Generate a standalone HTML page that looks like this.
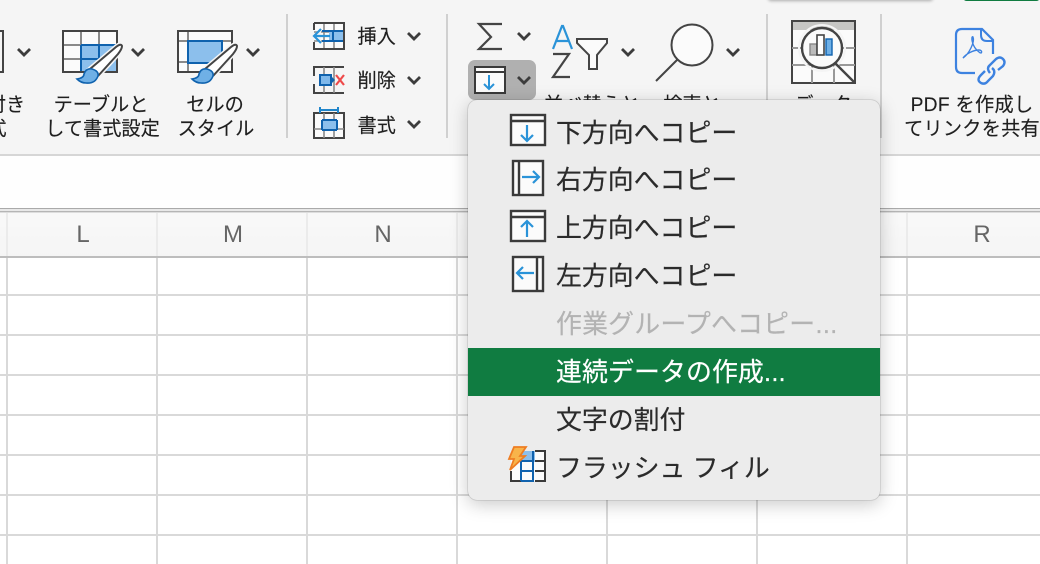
<!DOCTYPE html>
<html lang="ja"><head><meta charset="utf-8">
<style>
html,body{margin:0;padding:0;background:#fff}
#p{position:relative;width:1040px;height:564px;overflow:hidden;background:#fff;font-family:"Liberation Sans","Noto Sans CJK JP",sans-serif;color:#2b2b2b}
.a{position:absolute}
.t{position:absolute;white-space:nowrap;font-size:19.2px;line-height:24px;color:#1f1f1f;-webkit-text-stroke:.15px #1f1f1f}
.c{transform:translateX(-50%)}
.m{position:absolute;left:556px;white-space:nowrap;font-size:25.9px;line-height:34px;color:#2b2b2b;-webkit-text-stroke:.2px currentColor}
.h{position:absolute;left:0;width:1040px;height:2px;background:#d9d9d9}
.v{position:absolute;top:213px;width:2px;height:351px;background:#d9d9d9}
.col{position:absolute;top:220px;font-size:24px;line-height:30px;color:#666;transform:translateX(-50%)}
svg{position:absolute;left:0;top:0}
</style></head><body><div id="p">
<div class="a" style="left:0;top:0;width:1040px;height:154px;background:#f5f5f5"></div>
<div class="a" style="left:0;top:154px;width:1040px;height:2px;background:#d6d6d6"></div>
<div class="a" style="left:0;top:156px;width:1040px;height:52px;background:#fefefe"></div>
<div class="a" style="left:0;top:208px;width:1040px;height:5px;background:linear-gradient(#aaa 0,#aaa 1px,#e8e8e8 1px,#e8e8e8 3px,#b5b5b5 3px,#b5b5b5 4px,#ddd 4px)"></div>
<div class="a" style="left:0;top:213px;width:1040px;height:43px;background:linear-gradient(#fbfbfb,#f3f3f3)"></div>
<div class="h" style="top:294px"></div><div class="h" style="top:334px"></div><div class="h" style="top:374px"></div><div class="h" style="top:414px"></div><div class="h" style="top:454px"></div><div class="h" style="top:494px"></div><div class="h" style="top:534px"></div>
<div class="v" style="left:6px"></div><div class="v" style="left:156px"></div><div class="v" style="left:306px"></div><div class="v" style="left:456px"></div><div class="v" style="left:606px"></div><div class="v" style="left:756px"></div><div class="v" style="left:906px"></div>
<div class="a" style="left:0;top:213px;width:1040px;height:43px;background:rgba(246,246,246,.6)"></div>
<div class="h" style="top:256px;background:#bdbdbd"></div>
<div class="col" style="left:83px">L</div><div class="col" style="left:233px">M</div><div class="col" style="left:383px">N</div><div class="col" style="left:982px">R</div>

<div class="a" style="left:768px;top:-6px;width:165px;height:6px;background:#f0f0f0;box-shadow:0 1px 3px rgba(0,0,0,.3);border-radius:4px"></div>
<div class="a" style="left:963px;top:-6px;width:77px;height:7px;background:#107c41;border-radius:5px"></div>
<div class="a" style="left:286px;top:14px;width:2px;height:124px;background:#d0d0d0"></div>
<div class="a" style="left:446px;top:14px;width:2px;height:124px;background:#d0d0d0"></div>
<div class="a" style="left:766px;top:14px;width:2px;height:124px;background:#d0d0d0"></div>
<div class="a" style="left:880px;top:14px;width:2px;height:124px;background:#d0d0d0"></div>
<div class="a" style="left:468px;top:60px;width:68px;height:40px;background:#b0b0b0;border-radius:7px"></div>

<div class="t c" style="left:6px;top:94px">付き</div>
<div class="t c" style="left:-3px;top:118px">式</div>
<div class="t c" style="left:101px;top:94px">テーブルと</div>
<div class="t c" style="left:102.500px;top:118px">して書式設定</div>
<div class="t c" style="left:215px;top:94px">セルの</div>
<div class="t c" style="left:216px;top:118px">スタイル</div>
<div class="t" style="left:357.500px;top:26px">挿入</div>
<div class="t" style="left:357.500px;top:70px">削除</div>
<div class="t" style="left:357.500px;top:115px">書式</div>
<div class="t c" style="left:592px;top:94px">並べ替えと</div>
<div class="t c" style="left:692px;top:94px">検索と</div>
<div class="t c" style="left:823px;top:94px">データ</div>
<div class="t c" style="left:972px;top:94px;letter-spacing:.3px">PDF を作成し</div>
<div class="t c" style="left:972px;top:118px;letter-spacing:.2px">てリンクを共有</div>

<svg width="1040" height="564" fill="none">
<defs><path id="ch" d="M0 0l6 6 6-6" stroke="#3c3c3c" stroke-width="2.8"/></defs>
<g><use href="#ch" x="18" y="49"/><use href="#ch" x="132" y="49"/><use href="#ch" x="247" y="49"/><use href="#ch" x="408" y="33"/><use href="#ch" x="408" y="77"/><use href="#ch" x="408" y="121"/><use href="#ch" x="518" y="33"/><use href="#ch" x="518" y="77"/><use href="#ch" x="622" y="49"/><use href="#ch" x="727" y="49"/></g>
<path d="M0 31H3V72H0" stroke="#444" stroke-width="2"/>
<rect x="63" y="31" width="54" height="41" fill="#fbfbfb"/>
<rect x="81" y="45" width="36" height="27" fill="#8cbfec"/>
<path d="M81 31V72M99 31V72M63 45H117M63 59H117" stroke="#8a8a8a" stroke-width="2"/>
<path d="M81 45H117V72M81 45V72M81 59H117M99 45V72" stroke="#0f62ae" stroke-width="2"/>
<rect x="63" y="31" width="54" height="41" stroke="#444" stroke-width="2"/>
<rect x="178" y="31" width="54" height="41" fill="#fbfbfb"/>
<path d="M188 31V72M178 41H232M178 62H210" stroke="#8a8a8a" stroke-width="2"/>
<rect x="188" y="41" width="34" height="22" fill="#8cbfec" stroke="#0f62ae" stroke-width="2"/>
<rect x="178" y="31" width="54" height="41" stroke="#444" stroke-width="2"/>
<g>
<path d="M90 69L116 47Q121 43 122 46Q122 49 118 54L98 76Z" fill="#f5f5f5" stroke="#f5f5f5" stroke-width="5"/>
<path d="M90 69L116 47Q121 43 122 46Q122 49 118 54L98 76" fill="#fff" stroke="#444" stroke-width="2"/>
<path d="M77 79Q84 78 84 74Q86 68 92 69Q99 71 98 76Q95 84 86 83Q81 83 77 79Z" fill="#6fb0e6" stroke="#0f62ae" stroke-width="1.6"/>
</g>
<g transform="translate(115 0)"><path d="M90 69L116 47Q121 43 122 46Q122 49 118 54L98 76Z" fill="#f5f5f5" stroke="#f5f5f5" stroke-width="5"/>
<path d="M90 69L116 47Q121 43 122 46Q122 49 118 54L98 76" fill="#fff" stroke="#444" stroke-width="2"/>
<path d="M77 79Q84 78 84 74Q86 68 92 69Q99 71 98 76Q95 84 86 83Q81 83 77 79Z" fill="#6fb0e6" stroke="#0f62ae" stroke-width="1.6"/></g>
<rect x="314" y="23" width="30" height="26" fill="#fbfbfb"/>
<path d="M324 23V49M334 23V49M314 32H344M314 41H344" stroke="#8a8a8a" stroke-width="1.6"/>
<rect x="329" y="32" width="15" height="9" fill="#8cbfec"/>
<path d="M322 31H344M322 41H344M333 31V41" stroke="#0f62ae" stroke-width="2"/>
<path d="M314 23H344V49H314V42M314 30V23" stroke="#444" stroke-width="2"/>
<path d="M330 36H315M321 29L314 36L321 43" stroke="#2a93d8" stroke-width="2.2" fill="#f5f5f5"/>
<path d="M314 76V67H344M314 84V93H344" stroke="#444" stroke-width="2"/>
<path d="M324 67V93M334 67V93" stroke="#8a8a8a" stroke-width="1.6"/>
<rect x="320" y="75" width="11" height="10" fill="#7fb8ea" stroke="#0f62ae" stroke-width="2"/>
<path d="M331 76L335 80L331 84" fill="#0f62ae"/>
<path d="M336 75L344 85M344 75L336 85" stroke="#ee4a4a" stroke-width="2.2"/>
<rect x="314" y="113" width="30" height="25" fill="#fbfbfb" stroke="#444" stroke-width="2"/>
<path d="M324 113V138M334 113V138M314 129H344" stroke="#8a8a8a" stroke-width="1.6"/>
<rect x="322" y="120" width="15" height="10" fill="#8cbfec"/>
<path d="M322 120H337M322 130H337M322 120V130M337 120V130" stroke="#0f62ae" stroke-width="2"/>
<path d="M320 110H338M320 107V113M338 107V113" stroke="#2186cb" stroke-width="2"/>
<path d="M502 24H479L491 37L479 49H502" stroke="#444" stroke-width="2.2"/>
<rect x="475" y="67" width="30" height="26" fill="#fbfbfb" stroke="#3a3a3a" stroke-width="2"/>
<path d="M475 72H505" stroke="#3a3a3a" stroke-width="2"/>
<path d="M489 75V89M484 84L489 89L494 84" stroke="#2a93d8" stroke-width="2"/>
<path d="M553 49L562 26H563L572 49M556 41H569" stroke="#2a93d8" stroke-width="2.2"/>
<path d="M553 54H569L553 77H570" stroke="#444" stroke-width="2.2"/>
<path d="M577 39H607V43L597 55V69H589V55L577 43Z" fill="#fbfbfb" stroke="#444" stroke-width="2"/>
<circle cx="692" cy="45" r="20.5" fill="#fbfbfb" stroke="#444" stroke-width="2"/>
<path d="M677 60L656 81" stroke="#444" stroke-width="2"/>
<rect x="792" y="21" width="63" height="62" fill="#fbfbfb" stroke="#444" stroke-width="2"/>
<rect x="793" y="22" width="61" height="8" fill="#c6c6c4"/>
<path d="M792 48H855M792 65H855M812 65V83M834 65V83" stroke="#999" stroke-width="2"/>
<circle cx="822" cy="48" r="20" fill="#fbfbfb" stroke="#444" stroke-width="2.4"/>
<circle cx="822" cy="48" r="23" stroke="#f5f5f5" stroke-width="2"/>
<rect x="810" y="44" width="7" height="11" fill="#bbb" stroke="#888" stroke-width="1.4"/>
<rect x="817" y="35" width="7" height="20" fill="#fff" stroke="#444" stroke-width="1.6"/>
<rect x="826" y="39" width="6" height="16" fill="#6fb0e6" stroke="#0f62ae" stroke-width="1.4"/>
<path d="M835 63L855 83" stroke="#444" stroke-width="2.4"/>
<path d="M975 73H962Q956 73 956 67V35Q956 29 962 29H982L993 40V54" stroke="#3d82e0" stroke-width="2.2"/>
<path d="M981 30V35Q981 41 987 41H993" stroke="#3d82e0" stroke-width="2"/>
<path d="M963 58C969 54 975 42 973 37C971 35 971 46 979 52C982 55 983 50 979 50C973 50 966 54 963 58Z" stroke="#3d82e0" stroke-width="1.4"/>
<g stroke="#3d82e0" stroke-width="2.4">
<path d="M985 71L981 75Q976 80 981 83Q985 85 988 81L993 76Q996 71 992 68"/>
<path d="M990 73Q986 68 990 65L996 59Q1000 56 1003 59Q1006 62 1003 66L998 70"/>
</g>
</svg>

<div class="a" style="left:468px;top:100px;width:412px;height:400px;background:#ececec;border-radius:9px;box-shadow:0 0 1px rgba(0,0,0,.55),0 4px 18px rgba(0,0,0,.22)"></div>
<div class="a" style="left:468px;top:348px;width:412px;height:48px;background:#107c41"></div>
<div class="m" style="top:117px">下方向へコピー</div>
<div class="m" style="top:164px">右方向へコピー</div>
<div class="m" style="top:212px">上方向へコピー</div>
<div class="m" style="top:260px">左方向へコピー</div>
<div class="m" style="top:308px;color:#b3b3b3;letter-spacing:.2px">作業グループへコピー...</div>
<div class="m" style="top:356px;color:#fff;letter-spacing:.1px">連続データの作成...</div>
<div class="m" style="top:404px">文字の割付</div>
<div class="m" style="top:452px">フラッシュ フィル</div>

<svg width="1040" height="564" fill="none">
<g stroke="#3a3a3a" stroke-width="2.4" fill="#fbfbfb">
<rect x="511" y="115" width="34" height="30"/><rect x="513" y="161" width="30" height="34"/><rect x="511" y="211" width="34" height="30"/><rect x="513" y="257" width="30" height="34"/>
<path d="M511 121H545M519 161V195M511 217H545M537 257V291"/>
</g>
<g stroke="#2a93d8" stroke-width="2.2">
<path d="M527 125V141M521 135L527 141L533 135"/>
<path d="M522 177H539M533 171L539 177L533 183"/>
<path d="M527 221V237M521 227L527 221L533 227"/>
<path d="M534 273H517M523 267L517 273L523 279"/>
</g>
<rect x="511" y="451" width="34" height="30" fill="#fbfbfb"/>
<path d="M521 451L535 451V462H521Z" fill="#8cbfec"/>
<path d="M521 481H511V471M535 451H545V481H535M535 461H545M535 471H545" stroke="#3a3a3a" stroke-width="2"/>
<path d="M521 481V460M533 451V481M521 461H534M521 471H534M521 481H534" stroke="#0f62ae" stroke-width="2"/>
<path d="M514 447H526L520 456H525L510 470L514 459H509Z" fill="#f8b44a" stroke="#ee7d22" stroke-width="1.8"/>
</svg>
</div></body></html>
